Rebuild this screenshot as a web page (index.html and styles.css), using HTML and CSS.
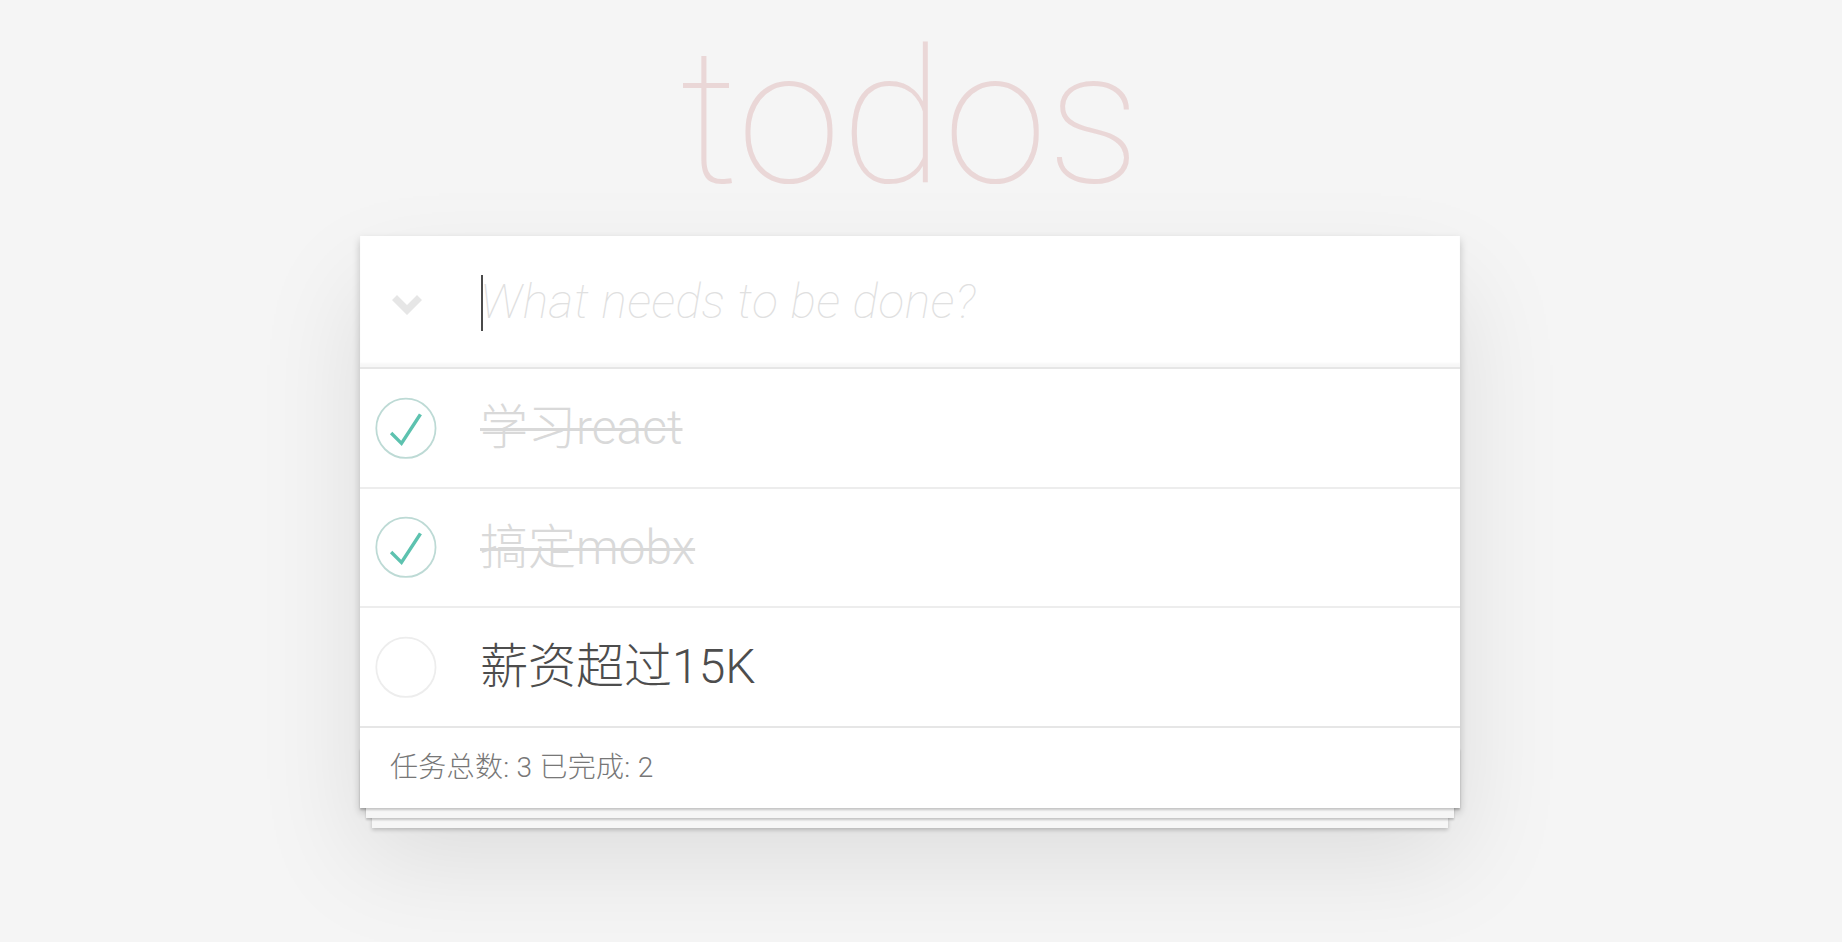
FILE: index.html
```html
<!DOCTYPE html>
<html lang="zh-CN">
<head>
<meta charset="utf-8">
<title>todos</title>
<link rel="stylesheet" href="styles.css">
</head>
<body>
<div class="page">
  <section class="todoapp">
    <header class="header">
      <h1 class="title">todos</h1>
    </header>
    <div class="card">
      <div class="new-row">
        <div class="toggle-all">
          <svg width="30" height="22" viewBox="0 0 30 22"><polygon points="0,6 5,1 15,11 25,1 30,6 15,21" fill="#e6e6e6"/></svg>
        </div>
        <div class="new-field">
          <span class="caret"></span>
          <input class="new-todo" type="text" placeholder="What needs to be done?">
        </div>
      </div>
      <ul class="todo-list">
        <li class="todo completed">
          <svg class="toggle" width="80" height="80" viewBox="-10 -18 100 135"><circle cx="50" cy="50" r="50" fill="none" stroke="#bddad5" stroke-width="3"/><path fill="#5dc2af" d="M72 25L42 71 27 56l-4 4 20 20 34-52z"/></svg>
          <label class="todo-label">学习react</label>
        </li>
        <li class="todo completed">
          <svg class="toggle" width="80" height="80" viewBox="-10 -18 100 135"><circle cx="50" cy="50" r="50" fill="none" stroke="#bddad5" stroke-width="3"/><path fill="#5dc2af" d="M72 25L42 71 27 56l-4 4 20 20 34-52z"/></svg>
          <label class="todo-label">搞定mobx</label>
        </li>
        <li class="todo">
          <svg class="toggle" width="80" height="80" viewBox="-10 -18 100 135"><circle cx="50" cy="50" r="50" fill="none" stroke="#ededed" stroke-width="3"/></svg>
          <label class="todo-label">薪资超过15K</label>
        </li>
      </ul>
      <footer class="footer">
        <span class="todo-count">任务总数: 3 已完成: 2</span>
      </footer>
    </div>
  </section>
</div>
</body>
</html>
```

FILE: styles.css
```css
html, body {
  margin: 0;
  padding: 0;
}

html {
  background: #f5f5f5;
}

body {
  min-height: 100vh;
  background: #f5f5f5;
  font-family: Roboto, "Noto Sans CJK SC", "Liberation Sans", sans-serif;
  font-weight: 300;
  color: #4d4d4d;
  -webkit-font-smoothing: antialiased;
}

.page {
  min-height: 942px;
  padding: 0 22px 0 0;
}

.todoapp {
  width: 1100px;
  margin: 0 auto;
}

.header {
  box-sizing: border-box;
  padding-top: 8px;
  height: 236px;
}

.title {
  margin: 0;
  height: 220px;
  font-size: 188px;
  line-height: 220px;
  font-weight: 100;
  text-align: center;
  color: rgba(175, 47, 47, 0.15);
}

.card {
  position: relative;
  z-index: 0;
  background: #fff;
  box-shadow: 0 4px 8px 0 rgba(0, 0, 0, 0.2), 0 50px 100px 0 rgba(0, 0, 0, 0.1);
}

.new-row {
  display: flex;
  align-items: center;
  height: 131px;
  background: #fff;
  box-shadow: inset 0 -4px 2px rgba(0, 0, 0, 0.03);
}

.toggle-all {
  width: 120px;
  flex: none;
  display: flex;
  padding-left: 32px;
  padding-top: 6px;
  box-sizing: border-box;
}

.new-field {
  position: relative;
  flex: 1;
  display: flex;
  align-items: center;
}

.caret {
  position: absolute;
  left: 1px;
  top: 50%;
  margin-top: -27px;
  width: 2px;
  height: 56px;
  background: #4a4a4a;
}

.new-todo {
  flex: 1;
  border: 0;
  outline: none;
  padding: 0 32px 0 0;
  margin: 0;
  background: transparent;
  font-family: inherit;
  font-weight: 300;
  font-size: 48px;
  line-height: 67px;
  height: 67px;
  color: #4d4d4d;
}

.new-todo::placeholder {
  font-style: italic;
  font-weight: 100;
  letter-spacing: 0.6px;
  color: #e0e0e0;
}

.todo-list {
  list-style: none;
  margin: 0;
  padding: 0;
  background: #fff;
  border-top: 2px solid #e6e6e6;
}

.todo {
  display: flex;
  align-items: center;
  font-size: 48px;
  border-bottom: 2px solid #ededed;
}

.todo:last-child {
  border-bottom: none;
}

.toggle {
  flex: none;
  display: block;
}

.todo-label {
  padding: 30px 30px 30px 40px;
  line-height: 1.2;
  word-break: break-all;
}

.completed .todo-label {
  color: #d9d9d9;
  text-decoration: line-through;
  text-decoration-thickness: 3px;
}

.footer {
  display: flex;
  align-items: center;
  position: relative;
  height: 40px;
  padding: 20px 30px;
  background: #fff;
  border-top: 2px solid #e6e6e6;
  color: #777;
  font-size: 28px;
}

.footer::before {
  content: "";
  position: absolute;
  right: 0;
  bottom: 0;
  left: 0;
  height: 60px;
  z-index: -1;
  box-shadow: 0 2px 2px rgba(0, 0, 0, 0.2),
              0 16px 0 -6px #f6f6f6,
              0 18px 2px -6px rgba(0, 0, 0, 0.2),
              0 32px 0 -12px #f6f6f6,
              0 34px 4px -12px rgba(0, 0, 0, 0.2);
}

.todo-count {
  line-height: 40px;
  letter-spacing: 0.3px;
}
```
